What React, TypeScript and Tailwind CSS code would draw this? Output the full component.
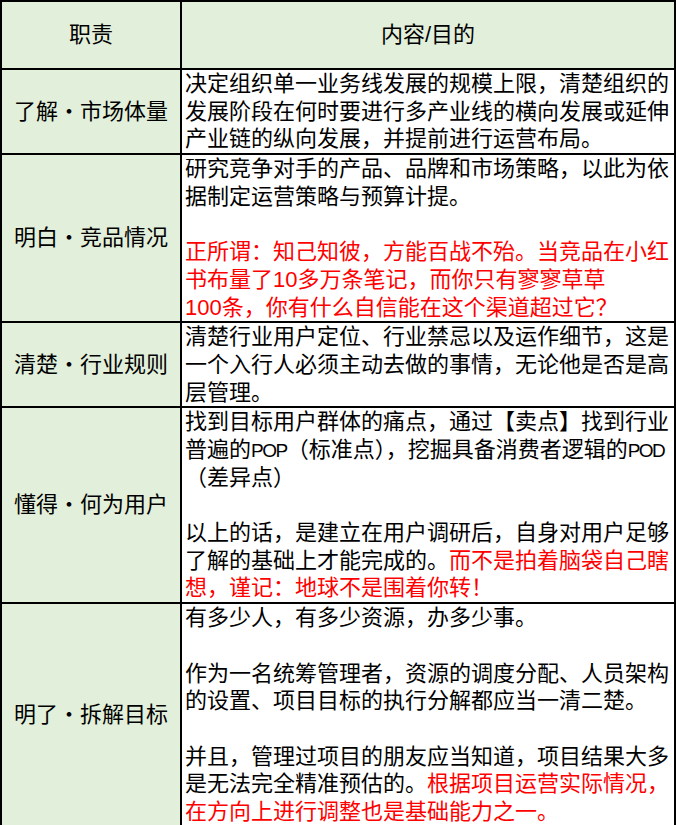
type Seg = { t: string; red?: boolean; narrow?: boolean };
type Line = Seg[];

const rows: { role: string; height: string; lines: Line[] }[] = [
  {
    role: "了解・市场体量",
    height: "h-[84px]",
    lines: [
      [{ t: "决定组织单一业务线发展的规模上限，清楚组织的" }],
      [{ t: "发展阶段在何时要进行多产业线的横向发展或延伸" }],
      [{ t: "产业链的纵向发展，并提前进行运营布局。" }],
    ],
  },
  {
    role: "明白・竞品情况",
    height: "h-[168px]",
    lines: [
      [{ t: "研究竞争对手的产品、品牌和市场策略，以此为依" }],
      [{ t: "据制定运营策略与预算计提。" }],
      [],
      [{ t: "正所谓：知己知彼，方能百战不殆。当竞品在小红", red: true }],
      [{ t: "书布量了10多万条笔记，而你只有寥寥草草", red: true }],
      [{ t: "100条，你有什么自信能在这个渠道超过它？", red: true }],
    ],
  },
  {
    role: "清楚・行业规则",
    height: "h-[84px]",
    lines: [
      [{ t: "清楚行业用户定位、行业禁忌以及运作细节，这是" }],
      [{ t: "一个入行人必须主动去做的事情，无论他是否是高" }],
      [{ t: "层管理。" }],
    ],
  },
  {
    role: "懂得・何为用户",
    height: "h-[196px]",
    lines: [
      [{ t: "找到目标用户群体的痛点，通过【卖点】找到行业" }],
      [
        { t: "普遍的" },
        { t: "POP", narrow: true },
        { t: "（标准点），挖掘具备消费者逻辑的" },
        { t: "POD", narrow: true },
      ],
      [{ t: "（差异点）" }],
      [],
      [{ t: "以上的话，是建立在用户调研后，自身对用户足够" }],
      [{ t: "了解的基础上才能完成的。" }, { t: "而不是拍着脑袋自己瞎", red: true }],
      [{ t: "想，谨记：地球不是围着你转！", red: true }],
    ],
  },
  {
    role: "明了・拆解目标",
    height: "h-[224px]",
    lines: [
      [{ t: "有多少人，有多少资源，办多少事。" }],
      [],
      [{ t: "作为一名统筹管理者，资源的调度分配、人员架构" }],
      [{ t: "的设置、项目目标的执行分解都应当一清二楚。" }],
      [],
      [{ t: "并且，管理过项目的朋友应当知道，项目结果大多" }],
      [{ t: "是无法完全精准预估的。" }, { t: "根据项目运营实际情况，", red: true }],
      [{ t: "在方向上进行调整也是基础能力之一。", red: true }],
    ],
  },
];

export default function App() {
  return (
    <div className="w-[676px] h-[825px] overflow-hidden bg-white text-black font-['Liberation_Sans','Noto_Sans_CJK_SC',sans-serif] text-[22px] leading-[27.7px]">
      <table className="w-[676px] border-collapse table-fixed">
        <colgroup>
          <col className="w-[180px]" />
          <col />
        </colgroup>
        <thead>
          <tr className="h-[68px] bg-[#e2efda]">
            <th className="border-2 border-black font-normal text-center align-middle">职责</th>
            <th className="border-2 border-black font-normal text-center align-middle">内容/目的</th>
          </tr>
        </thead>
        <tbody>
          {rows.map((r) => (
            <tr key={r.role} className={r.height}>
              <td className="border-2 border-black bg-[#e2efda] text-center align-middle whitespace-nowrap">
                {r.role}
              </td>
              <td className="border-2 border-black align-top pl-[3px] pt-0 pb-0">
                {r.lines.map((line, i) => (
                  <div key={i} className="whitespace-nowrap h-[27.7px]">
                    {line.map((s, j) => (
                      <span
                        key={j}
                        className={
                          s.narrow
                            ? "text-[19px] tracking-[-1.5px]"
                            : s.red
                              ? "text-[#ff0000]"
                              : undefined
                        }
                      >
                        {s.t}
                      </span>
                    ))}
                  </div>
                ))}
              </td>
            </tr>
          ))}
        </tbody>
      </table>
    </div>
  );
}
